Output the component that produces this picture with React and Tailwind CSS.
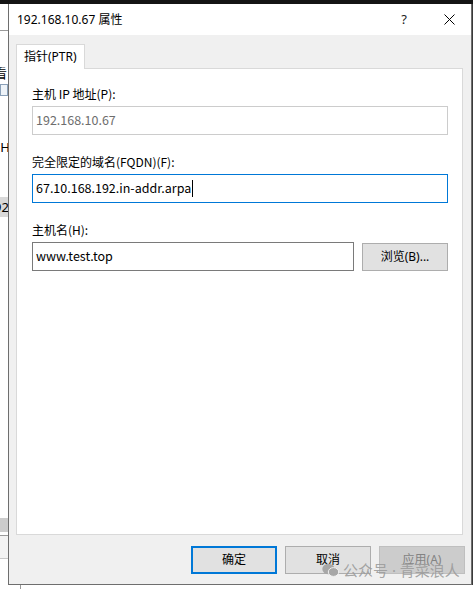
const ui = { fontFamily: '"Noto Sans", "Noto Sans CJK SC", sans-serif' };
const cjk = { fontFamily: '"Noto Sans CJK SC", "Noto Sans", sans-serif' };

function Field({ value, className = "", children }) {
  return (
    <div
      className={`h-[29px] flex items-center px-[3px] bg-white text-[12.5px] ${className}`}
      style={cjk}
    >
      {value}
      {children}
    </div>
  );
}

function Button({ label, primary, disabled }) {
  const base =
    "w-[86px] h-[28px] flex items-center justify-center text-[12px]";
  if (disabled)
    return (
      <div className={`${base} bg-[#cccccc] border border-[#bfbfbf] text-[#838383]`}>
        {label}
      </div>
    );
  return (
    <div
      className={`${base} bg-[#e1e1e1] text-black ${
        primary ? "border-2 border-[#0078d7]" : "border border-[#adadad]"
      }`}
    >
      {label}
    </div>
  );
}

export default function App() {
  return (
    <div
      className="w-[473px] h-[589px] flex flex-col overflow-hidden bg-white relative"
      style={ui}
    >
      {/* desktop edge above the window */}
      <div className="h-[4px] bg-[#141414] shrink-0" />

      <div className="flex h-[581px] shrink-0">
        {/* sliver of the window behind */}
        <div className="w-[8px] shrink-0 overflow-hidden bg-white flex flex-col text-[13px] text-black">
          <div className="h-[27px] shrink-0 border-b border-[#9a9a9a]" />
          <div className="h-[16px] shrink-0 -ml-[6px] mt-[34px] leading-[16px]">看</div>
          <div className="h-[12px] shrink-0 w-[8px] mt-[3px] border border-[#8aa0b8] bg-[#eef3f8]" />
          <div className="h-[16px] shrink-0 -ml-[8px] mt-[43px] leading-[16px] whitespace-nowrap">CH</div>
          <div className="h-[20px] shrink-0 -ml-[7px] mt-[42px] leading-[20px] bg-[#d9d9d9] pl-[1px] whitespace-nowrap">92</div>
          <div className="flex-1" />
          <div className="h-[14px] shrink-0 bg-[#cccccc]" />
          <div className="h-[3px] shrink-0" />
          <div className="shrink-0 border-b border-[#9a9a9a]" />
          <div className="h-[23px] shrink-0 bg-[#f3f3f3] border-b border-[#c8c8c8]" />
          <div className="h-[26px] shrink-0" />
        </div>

        {/* properties dialog */}
        <div className="w-[464px] shrink-0 flex flex-col border border-t-0 border-[#6e6e6e] bg-[#f0f0f0]">
          <div className="h-[31px] bg-white flex items-center shrink-0">
            <span className="pl-[8px] text-[12px] text-black flex-1">
              192.168.10.67 属性
            </span>
            <span className="w-[46px] text-center text-[13px] text-[#222]">?</span>
            <div className="w-[44px] flex justify-center">
              <svg width="11" height="11" viewBox="0 0 11 11">
                <path d="M0.5 0.5L10.5 10.5M10.5 0.5L0.5 10.5" stroke="#000" strokeWidth="1" />
              </svg>
            </div>
          </div>

          <div className="pl-[7px] pr-[8px] pt-[9px] flex flex-col">
            <div className="flex">
              <div className="h-[25px] px-[7px] bg-white border border-b-0 border-[#d9d9d9] text-[12px] leading-[24px] text-black -mb-[1px] relative">
                指针(PTR)
              </div>
            </div>
            <div className="h-[467px] bg-white border border-[#d9d9d9] pl-[15px] pr-[14px] pt-[17px] flex flex-col text-[12px] text-black">
              <div className="leading-[16px]" style={cjk}>主机 IP 地址(P):</div>
              <Field
                value="192.168.10.67"
                className="mt-[4px] border border-[#cccccc] text-[#6d6d6d]"
              />
              <div className="leading-[16px] mt-[19px]" style={cjk}>完全限定的域名(FQDN)(F):</div>
              <Field
                value="67.10.168.192.in-addr.arpa"
                className="mt-[4px] border border-[#0078d7] text-black"
              >
                <span className="inline-block w-px h-[17px] bg-black ml-px" />
              </Field>
              <div className="leading-[16px] mt-[19px]" style={cjk}>主机名(H):</div>
              <div className="flex gap-[8px] mt-[4px]">
                <Field
                  value="www.test.top"
                  className="w-[322px] border border-[#7a7a7a] text-black"
                />
                <div className="w-[86px] h-[28px] mt-px flex items-center justify-center bg-[#e1e1e1] border border-[#adadad] text-[12px]">
                  浏览(B)...
                </div>
              </div>
            </div>
          </div>

          <div className="flex justify-end gap-[8px] pr-[6px] pt-[11px]">
            <Button label="确定" primary />
            <Button label="取消" />
            <Button label="应用(A)" disabled />
          </div>
        </div>

        <div className="w-[1px] bg-[#3a3a3a]" />
      </div>

      <div className="h-[4px] bg-white flex shrink-0">
        <div className="w-[21px] border-r border-[#9a9a9a]" />
      </div>

      {/* account stamp over the footer */}
      <div className="absolute left-[322px] top-[559px] flex items-center gap-[4px] text-[15px] text-[#9b9b9b]/90">
        <svg width="17" height="14" viewBox="0 0 17 14">
          <ellipse cx="6.5" cy="6" rx="6.2" ry="5.2" fill="#a7a7a7" />
          <ellipse cx="11.5" cy="9" rx="5.2" ry="4.4" fill="#a7a7a7" stroke="#f0f0f0" strokeWidth="1" />
        </svg>
        <span>公众号 · 青菜浪人</span>
      </div>
    </div>
  );
}
